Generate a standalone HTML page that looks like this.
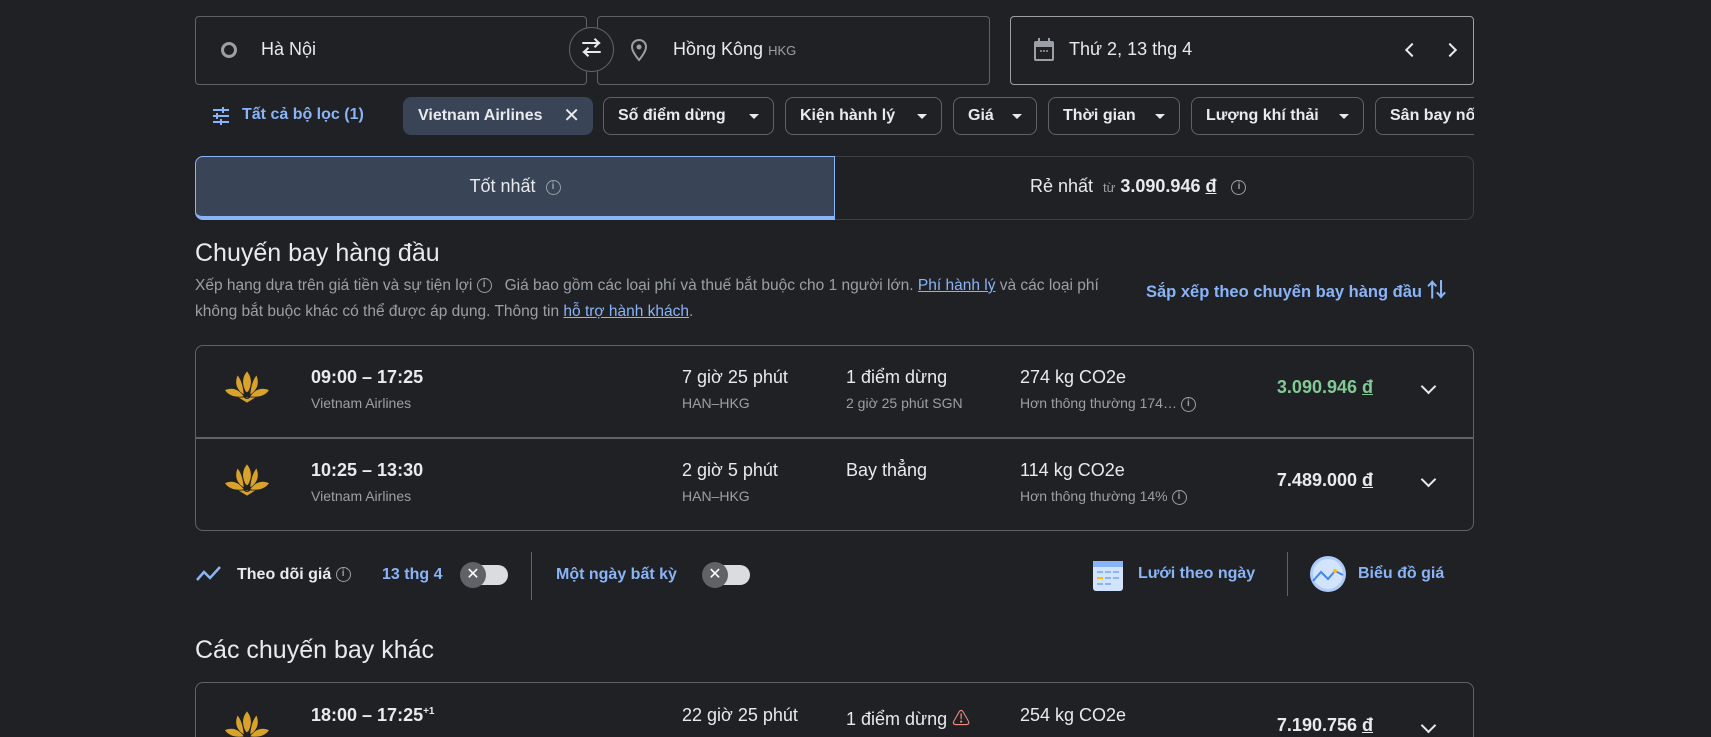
<!DOCTYPE html>
<html style="overflow:hidden;height:737px"><head><meta charset="utf-8"><style>
*{box-sizing:border-box;margin:0;padding:0}
body{width:1711px;height:737px;background:#202124;color:#e8eaed;font-family:"Liberation Sans","Noto Sans CJK SC",sans-serif;position:relative;overflow:hidden}
.a{position:absolute;white-space:nowrap}
.box{position:absolute;border:1px solid #5f6368;border-radius:4px}
.chip{position:absolute;top:97px;height:38px;border:1px solid #5f6368;border-radius:8px;font-size:16px;line-height:36px;padding-left:14px;color:#e8eaed;font-weight:bold}
.chip .ar{position:absolute;right:14px;top:16px;border-left:5px solid transparent;border-right:5px solid transparent;border-top:5px solid #e8eaed}
.sec{color:#9aa0a6;font-size:14px}
.t{font-size:18px}
.info{display:inline-block;width:15px;height:15px;border:1.5px solid #9aa0a6;border-radius:50%;font-size:10px;line-height:12px;text-align:center;color:#9aa0a6;font-weight:bold;vertical-align:middle}
.chev{position:absolute;width:11px;height:11px;border-right:2px solid #e8eaed;border-bottom:2px solid #e8eaed;transform:rotate(45deg)}
.tog{position:absolute;width:46px;height:20px;border-radius:10px;background:#dadce0}
.tog i{position:absolute;left:-2px;top:-3px;width:26px;height:26px;border-radius:50%;background:#5f6368;color:#fff;font-style:normal;text-align:center;line-height:26px;font-size:16px}
.blue{color:#8ab4f8}
</style></head><body>
<div style="position:absolute;left:0;top:0;width:1711px;height:737px;overflow:hidden">

<div class="box" style="left:195px;top:16px;width:392px;height:69px"></div>
<div class="a" style="left:221px;top:42px;width:16px;height:16px;border:3px solid #9aa0a6;border-radius:50%"></div>
<div class="a t" style="left:261px;top:39px">Hà Nội</div>
<div class="box" style="left:597px;top:16px;width:393px;height:69px"></div>
<div class="a" style="left:569px;top:27px;width:45px;height:45px;border:1px solid #5f6368;border-radius:50%;background:#202124;text-align:center;line-height:42px;font-size:20px;font-weight:bold">⇄</div>
<svg class="a" style="left:630px;top:38px" width="18" height="24" viewBox="0 0 18 24"><path d="M9 2C5 2 2 5 2 9c0 5 7 13 7 13s7-8 7-13c0-4-3-7-7-7z" fill="none" stroke="#9aa0a6" stroke-width="2"/><circle cx="9" cy="9" r="2.5" fill="#9aa0a6"/></svg>
<div class="a t" style="left:673px;top:39px">Hồng Kông <span style="font-size:13px;color:#9aa0a6">HKG</span></div>
<div class="box" style="left:1010px;top:16px;width:464px;height:69px;border-color:#9aa0a6"></div>
<svg class="a" style="left:1032px;top:37px" width="24" height="26" viewBox="0 0 24 26"><rect x="2" y="4" width="20" height="20" rx="2" fill="#9aa0a6"/><rect x="4" y="10" width="16" height="12" fill="#202124"/><rect x="6" y="1" width="2" height="5" fill="#9aa0a6"/><rect x="16" y="1" width="2" height="5" fill="#9aa0a6"/><circle cx="9" cy="14" r="1" fill="#9aa0a6"/><circle cx="12" cy="14" r="1" fill="#9aa0a6"/><circle cx="15" cy="14" r="1" fill="#9aa0a6"/></svg>
<div class="a t" style="left:1069px;top:39px">Thứ 2, 13 thg 4</div>
<div class="chev" style="left:1407px;top:45px;transform:rotate(135deg);width:10px;height:10px"></div>
<div class="chev" style="left:1445px;top:45px;transform:rotate(-45deg);width:10px;height:10px"></div>

<svg class="a" style="left:211px;top:106px" width="20" height="20" viewBox="0 0 20 20" stroke="#8ab4f8" stroke-width="2"><path d="M2 4h16M2 10h16M2 16h16"/><path d="M12 1v6M6 7v6M10 13v6" /></svg>
<div class="a blue" style="left:242px;top:106px;font-size:16px;font-weight:bold">Tất cả bộ lọc (1)</div>
<div class="chip" style="left:403px;width:190px;background:#394457;border-color:#394457">Vietnam Airlines<span style="position:absolute;right:12px;font-size:20px;font-weight:normal">✕</span></div>
<div class="chip" style="left:603px;width:171px">Số điểm dừng<span class="ar"></span></div>
<div class="chip" style="left:785px;width:157px">Kiện hành lý<span class="ar"></span></div>
<div class="chip" style="left:953px;width:84px">Giá<span class="ar"></span></div>
<div class="chip" style="left:1048px;width:132px">Thời gian<span class="ar"></span></div>
<div class="chip" style="left:1191px;width:173px">Lượng khí thải<span class="ar"></span></div>
<div style="position:absolute;left:1375px;top:97px;width:99px;height:38px;overflow:hidden"><div class="chip" style="left:0;top:0;width:140px">Sân bay nối</div></div>

<div class="a" style="left:195px;top:156px;width:1279px;height:64px;border:1px solid #3c4043;border-radius:8px"></div>
<div class="a" style="left:195px;top:156px;width:640px;height:64px;background:#394457;border:1px solid #8ab4f8;border-radius:8px 0 0 8px;border-bottom:4px solid #8ab4f8;text-align:center;line-height:58px;font-size:18px">Tốt nhất &nbsp;<span class="info">i</span></div>
<div class="a" style="left:1030px;top:176px;font-size:18px">Rẻ nhất &nbsp;<span style="font-size:13px;color:#9aa0a6">từ</span> <b>3.090.946 <u>đ</u></b> &nbsp; <span class="info">i</span></div>

<div class="a" style="left:195px;top:239px;font-size:25px">Chuyến bay hàng đầu</div>
<div class="a sec" style="left:195px;top:277px;font-size:15.5px">Xếp hạng dựa trên giá tiền và sự tiện lợi <span class="info">i</span> &nbsp; Giá bao gồm các loại phí và thuế bắt buộc cho 1 người lớn. <u class="blue">Phí hành lý</u> và các loại phí</div>
<div class="a sec" style="left:195px;top:303px;font-size:15.5px">không bắt buộc khác có thể được áp dụng. Thông tin <u class="blue">hỗ trợ hành khách</u>.</div>
<div class="a blue" style="left:1146px;top:274px;font-size:16.5px;font-weight:bold">Sắp xếp theo chuyến bay hàng đầu <span style="font-size:20px">⇅</span></div>

<div class="a" style="left:195px;top:345px;width:1279px;height:186px;border:1px solid #5f6368;border-radius:8px"></div>
<div class="a" style="left:195px;top:437px;width:1279px;height:2px;background:#5f6368"></div>

<svg style="display:none"><symbol id="lotus" viewBox="0 0 44 32"><path d="M22 1c-5 6-5 14 0 21 5-7 5-15 0-21zM13 5c-3 7-1 14 6 18-1-7-2-13-6-18zM31 5c3 7 1 14-6 18 1-7 2-13 6-18zM1 19c7-3 13-1 18 6-7 1-14 0-18-6zM43 19c-7-3-13-1-18 6 7 1 14 0 18-6zM14 26h16l-8 5z" fill="#d9a22b"/><circle cx="22" cy="24" r="3" fill="none" stroke="#202124" stroke-width="1"/></symbol></svg>

<svg class="a" style="left:224px;top:370px" width="46" height="34"><use href="#lotus"/></svg>
<div class="a t" style="left:311px;top:367px;font-weight:bold">09:00 – 17:25</div>
<div class="a sec" style="left:311px;top:395px">Vietnam Airlines</div>
<div class="a t" style="left:682px;top:367px">7 giờ 25 phút</div>
<div class="a sec" style="left:682px;top:395px">HAN–HKG</div>
<div class="a t" style="left:846px;top:367px">1 điểm dừng</div>
<div class="a sec" style="left:846px;top:395px">2 giờ 25 phút SGN</div>
<div class="a t" style="left:1020px;top:367px">274 kg CO2e</div>
<div class="a sec" style="left:1020px;top:395px">Hơn thông thường 174… <span class="info">i</span></div>
<div class="a t" style="right:338px;top:377px;color:#81c995;font-weight:bold">3.090.946 <u>đ</u></div>
<div class="chev" style="left:1423px;top:381px"></div>

<svg class="a" style="left:224px;top:463px" width="46" height="34"><use href="#lotus"/></svg>
<div class="a t" style="left:311px;top:460px;font-weight:bold">10:25 – 13:30</div>
<div class="a sec" style="left:311px;top:488px">Vietnam Airlines</div>
<div class="a t" style="left:682px;top:460px">2 giờ 5 phút</div>
<div class="a sec" style="left:682px;top:488px">HAN–HKG</div>
<div class="a t" style="left:846px;top:460px">Bay thẳng</div>
<div class="a t" style="left:1020px;top:460px">114 kg CO2e</div>
<div class="a sec" style="left:1020px;top:488px">Hơn thông thường 14% <span class="info">i</span></div>
<div class="a t" style="right:338px;top:470px;font-weight:bold">7.489.000 <u>đ</u></div>
<div class="chev" style="left:1423px;top:474px"></div>

<svg class="a" style="left:195px;top:564px" width="28" height="20" viewBox="0 0 28 20"><path d="M2 16l7-8 6 6 10-11" fill="none" stroke="#8ab4f8" stroke-width="2.5"/></svg>
<div class="a" style="left:237px;top:566px;font-size:16px;font-weight:bold">Theo dõi giá <span class="info">i</span></div>
<div class="a blue" style="left:382px;top:566px;font-size:16px;font-weight:bold">13 thg 4</div>
<div class="tog" style="left:462px;top:565px"><i>✕</i></div>
<div class="a" style="left:531px;top:552px;width:1px;height:48px;background:#5f6368"></div>
<div class="a blue" style="left:556px;top:566px;font-size:16px;font-weight:bold">Một ngày bất kỳ</div>
<div class="tog" style="left:704px;top:565px"><i>✕</i></div>
<svg class="a" style="left:1091px;top:557px" width="34" height="36" viewBox="0 0 34 36"><rect x="2" y="4" width="30" height="30" rx="3" fill="#d2e3fc"/><rect x="2" y="4" width="30" height="6" fill="#8ab4f8"/><g fill="#8ab4f8"><rect x="6" y="14" width="6" height="2"/><rect x="14" y="14" width="6" height="2"/><rect x="22" y="14" width="6" height="2"/><rect x="14" y="20" width="6" height="2"/><rect x="22" y="20" width="6" height="2"/><rect x="6" y="26" width="6" height="2"/><rect x="14" y="26" width="6" height="2"/></g><rect x="6" y="20" width="6" height="2" fill="#fbbc04"/></svg>
<div class="a blue" style="left:1138px;top:565px;font-size:16px;font-weight:bold">Lưới theo ngày</div>
<div class="a" style="left:1287px;top:552px;width:1px;height:44px;background:#5f6368"></div>
<svg class="a" style="left:1309px;top:555px" width="38" height="38" viewBox="0 0 38 38"><circle cx="19" cy="19" r="18" fill="#aecbfa"/><circle cx="19" cy="19" r="15" fill="#d2e3fc"/><path d="M4 26l8-9 7 7 7-8 8 4" fill="none" stroke="#4285f4" stroke-width="2"/><circle cx="26" cy="16" r="2" fill="#fbbc04"/></svg>
<div class="a blue" style="left:1358px;top:565px;font-size:16px;font-weight:bold">Biểu đồ giá</div>

<div class="a" style="left:195px;top:636px;font-size:25px">Các chuyến bay khác</div>
<div class="a" style="left:195px;top:682px;width:1279px;height:60px;border:1px solid #5f6368;border-bottom:none;border-radius:8px 8px 0 0"></div>
<svg class="a" style="left:224px;top:710px" width="46" height="34"><use href="#lotus"/></svg>
<div class="a t" style="left:311px;top:705px;font-weight:bold">18:00 – 17:25<sup style="font-size:10px">+1</sup></div>
<div class="a t" style="left:682px;top:705px">22 giờ 25 phút</div>
<div class="a t" style="left:846px;top:705px">1 điểm dừng <span style="color:#f28b82">⚠</span></div>
<div class="a t" style="left:1020px;top:705px">254 kg CO2e</div>
<div class="a t" style="right:338px;top:715px;font-weight:bold">7.190.756 <u>đ</u></div>
<div class="chev" style="left:1423px;top:720px"></div>
</div>
</body></html>
